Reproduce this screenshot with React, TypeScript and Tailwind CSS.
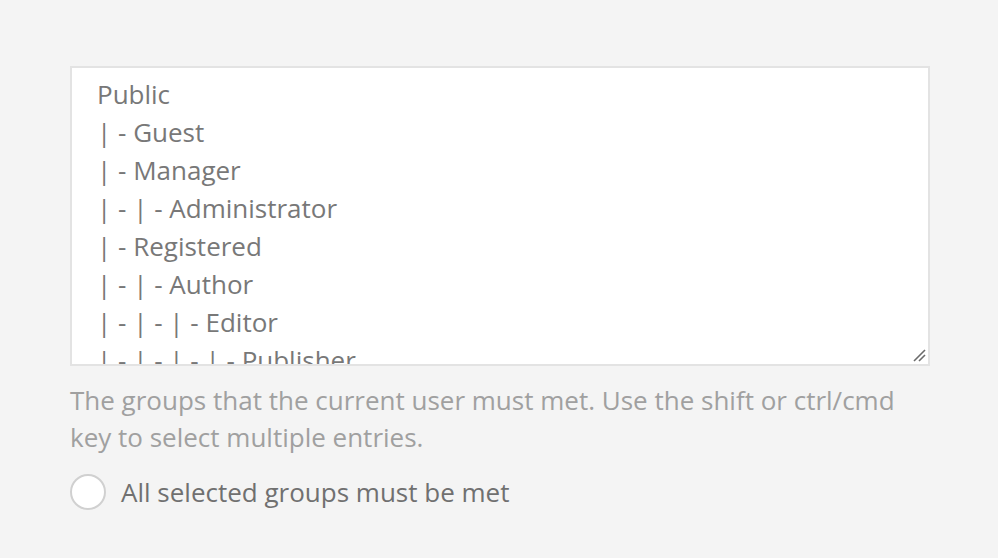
import React from "react";

const options = [
  "Public",
  "| - Guest",
  "| - Manager",
  "| - | - Administrator",
  "| - Registered",
  "| - | - Author",
  "| - | - | - Editor",
  "| - | - | - | - Publisher",
];

export default function App() {
  return (
    <div
      className="w-[998px] h-[558px] bg-[#f4f4f4] pt-[66px] pl-[70px] pr-[68px]"
      style={{ fontFamily: '"Open Sans", sans-serif' }}
    >
      <div className="relative h-[300px] w-[860px] border-2 border-[#e3e3e3] bg-white overflow-hidden">
        <div className="pt-[7px] pl-[25px] text-[26px] leading-[38px] text-[#787878]">
          {options.map((o) => (
            <div key={o} className="whitespace-pre">
              {o}
            </div>
          ))}
        </div>
        <svg
          className="absolute right-[2px] bottom-[2px]"
          width="14"
          height="14"
          viewBox="0 0 14 14"
        >
          <path d="M2 13 L13 2" stroke="#6b6b6b" strokeWidth="1.6" />
          <path d="M7 13 L13 7" stroke="#6b6b6b" strokeWidth="1.6" />
        </svg>
      </div>
      <p className="mt-[16px] text-[26px] leading-[37px] text-[#a0a0a0]">
        The groups that the current user must met. Use the shift or ctrl/cmd
        key to select multiple entries.
      </p>
      <label className="mt-[18px] flex items-center gap-[15px]">
        <span className="h-[36px] w-[36px] shrink-0 rounded-full border-2 border-[#d0d0d0] bg-white" />
        <span className="text-[26px] leading-[36px] text-[#707070]">
          All selected groups must be met
        </span>
      </label>
    </div>
  );
}
